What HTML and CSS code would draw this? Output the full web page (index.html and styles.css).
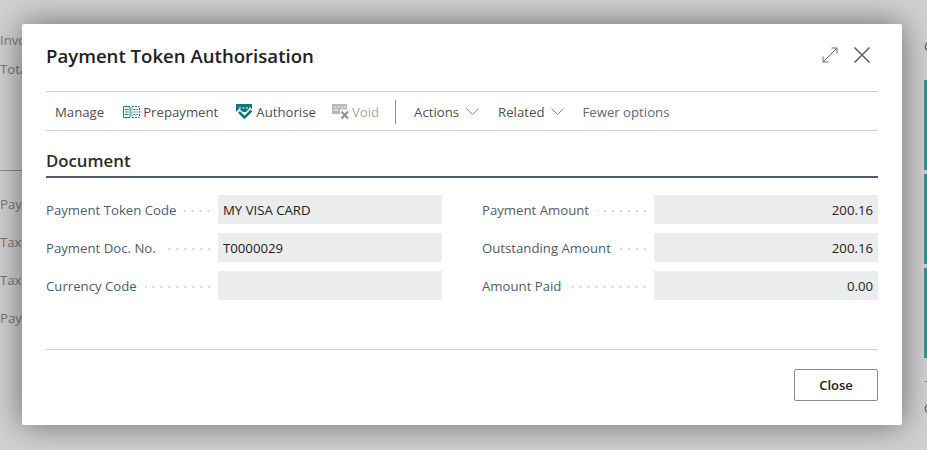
FILE: index.html
```html
<!DOCTYPE html>
<html lang="en">

<head>
    <meta charset="UTF-8">
    <meta name="viewport" content="width=device-width, initial-scale=1.0">
    <title>Payment Token Authorisation</title>
    <link rel="stylesheet" href="styles.css">
</head>

<body>

    <!-- page behind the dialog -->
    <div class="page">
        <div class="page-left">
            <div class="bg-top">
                <span>Invo</span>
                <span>Tota</span>
            </div>
            <div class="bg-line"></div>
            <div class="bg-rows">
                <span>Pay</span>
                <span>Tax</span>
                <span>Tax</span>
                <span>Pay</span>
            </div>
        </div>
        <div class="page-right">
            <span class="bg-c bg-c-top">C</span>
            <div class="tile"></div>
            <div class="tile"></div>
            <div class="tile"></div>
            <div class="bg-rule"></div>
            <span class="bg-c">C</span>
        </div>
    </div>

    <div class="dialog">
        <div class="dialog-head">
            <h1>Payment Token Authorisation</h1>
            <div class="head-icons">
                <svg width="18" height="18" viewBox="0 0 18 18" fill="none" stroke="#666" stroke-width="1">
                    <path d="M2 16 16 2M10.500 2H16v5.500M2 10.500V16h5.500" />
                </svg>
                <svg width="18" height="18" viewBox="0 0 18 18" fill="none" stroke="#605e5c" stroke-width="1.500">
                    <path d="M1.500 1.500 16.500 16.500M16.500 1.500 1.500 16.500" />
                </svg>
            </div>
        </div>

        <div class="actions">
            <span class="action first">Manage</span>
            <span class="action">
                <svg width="17" height="12" viewBox="0 0 17 12" fill="none" stroke="#1f7f86">
                    <path d="M.5.500h6.500v11H.5zM2 3.500h3.500M2 6h3.500M2 8.500h3.500" />
                    <path d="M9 .5h7.500v11H9z" stroke-dasharray="2 1" />
                    <path d="M10.500 3.500h4.500M10.500 6h4.500M10.500 8.500h4.500" stroke-dasharray="2 1" />
                </svg>
                Prepayment
            </span>
            <span class="action tight">
                <svg width="17" height="16" viewBox="0 0 17 16">
                    <path d="M0 0h16v8H0z" fill="#12777e" />
                    <path d="M3 4h2M6.500 4h2M10 4h2M13 4h1.500" stroke="#fff" fill="none" />
                    <path d="M1.500 6.500 8.500 13 16 5.500" stroke="#fff" stroke-width="5" fill="none" />
                    <path d="M3 8 8.500 13.500 15.500 6.500" stroke="#12777e" stroke-width="2.600" fill="none" />
                </svg>
                Authorise
            </span>
            <span class="action off">
                <svg width="18" height="16" viewBox="0 0 18 16">
                    <path d="M0 0h15v10H0z" fill="#b8b8b8" />
                    <path d="M2 3h2M5.500 3h2M9 3h2M12 3h2M2 6h4" stroke="#fff" fill="none" />
                    <path d="M8 5.500h9v10H8z" fill="#fff" />
                    <path d="M9.500 7.500 16 14.500M16 7.500 9.500 14.500" stroke="#8f8f8f" stroke-width="2" fill="none" />
                </svg>
                Void
            </span>
            <span class="sep"></span>
            <span class="action wide">
                Actions
                <svg class="chev" width="13" height="7" viewBox="0 0 13 7" fill="none" stroke="#888">
                    <path d="M.5.500 6.500 6.500 12.500.500" />
                </svg>
            </span>
            <span class="action">
                Related
                <svg class="chev" width="13" height="7" viewBox="0 0 13 7" fill="none" stroke="#888">
                    <path d="M.5.500 6.500 6.500 12.500.500" />
                </svg>
            </span>
            <span class="action fewer">Fewer options</span>
        </div>

        <h2>Document</h2>

        <div class="fields">
            <div class="field">
                <label>Payment Token Code</label>
                <span class="dots"></span>
                <span class="value">MY VISA CARD</span>
            </div>
            <div class="field">
                <label>Payment Amount</label>
                <span class="dots"></span>
                <span class="value num">200.16</span>
            </div>
            <div class="field">
                <label>Payment Doc. No.</label>
                <span class="dots"></span>
                <span class="value">T0000029</span>
            </div>
            <div class="field">
                <label>Outstanding Amount</label>
                <span class="dots"></span>
                <span class="value num">200.16</span>
            </div>
            <div class="field">
                <label>Currency Code</label>
                <span class="dots"></span>
                <span class="value"></span>
            </div>
            <div class="field">
                <label>Amount Paid</label>
                <span class="dots"></span>
                <span class="value num">0.00</span>
            </div>
        </div>

        <div class="dialog-foot">
            <button class="btn-close">Close</button>
        </div>
    </div>

</body>

</html>
```

FILE: styles.css
```css
* {
    padding: 0;
    margin: 0;
    box-sizing: border-box;
}

html,
body {
    height: 100%;
    overflow: hidden;
}

body {
    background-color: #d1d1d1;
    font-family: "Open Sans", "Noto Sans", sans-serif;
    font-size: 13.2px;
    color: #212121;
    position: relative;
}

.page {
    display: flex;
    justify-content: space-between;
    height: 100%;
    color: #777;
}

.page-left {
    width: 120px;
    white-space: nowrap;
}

.bg-top {
    display: flex;
    flex-direction: column;
    gap: 11px;
    padding-top: 31px;
    line-height: 18px;
}

.bg-line {
    height: 1px;
    background-color: #8c8c8c;
    margin-top: 92px;
}

.bg-rows {
    display: flex;
    flex-direction: column;
    gap: 20px;
    padding-top: 24px;
    line-height: 18px;
}

.page-right {
    width: 3px;
    white-space: nowrap;
    display: flex;
    flex-direction: column;
    gap: 4px;
}

.bg-c {
    line-height: 18px;
    margin-top: 13px;
    color: #555;
}

.bg-c-top {
    margin-top: 37px;
    margin-bottom: 21px;
}

.tile {
    height: 90px;
    flex: none;
    background-color: #3f8f92;
}

.bg-rule {
    height: 1px;
    flex: none;
    background-color: #999;
    margin-top: 19px;
}

.dialog {
    position: absolute;
    left: 22px;
    top: 24px;
    width: 880px;
    height: 401px;
    background-color: #fff;
    border-radius: 2px;
    padding: 0 24px;
    box-shadow: 0 0 32px rgba(0, 0, 0, .5);
    display: flex;
    flex-direction: column;
}

.dialog-head {
    display: flex;
    justify-content: space-between;
    align-items: center;
    height: 67px;
    padding-bottom: 5px;
}

h1 {
    font-size: 18.6px;
    font-weight: 600;
    color: #212121;
}

.head-icons {
    display: flex;
    gap: 14px;
    padding-right: 7px;
}

.actions {
    display: flex;
    align-items: center;
    height: 40px;
    border-top: 1px solid #d0d0d0;
    border-bottom: 1px solid #d0d0d0;
    color: #505050;
    padding-top: 1px;
}

.action {
    display: flex;
    align-items: center;
    gap: 3px;
    margin-right: 18px;
    white-space: nowrap;
}

.tight {
    margin-right: 16px;
}

.wide {
    margin-right: 19px;
}

.first {
    margin-left: 9px;
    margin-right: 19px;
}

.off {
    color: #a8a8a8;
    margin-right: 16px;
    gap: 2px;
}

.fewer {
    color: #5c6b7a;
}

.chev {
    margin-left: 4px;
}

.sep {
    width: 1px;
    height: 24px;
    background-color: #8a949e;
    margin-right: 18px;
}

h2 {
    font-size: 16.8px;
    font-weight: 600;
    line-height: 22px;
    color: #2b2b2b;
    margin-top: 19px;
    padding-bottom: 4px;
    border-bottom: 2px solid #505c6d;
}

.fields {
    display: grid;
    grid-template-columns: 396px 396px;
    column-gap: 40px;
    row-gap: 9px;
    margin-top: 17px;
}

.field {
    display: flex;
    align-items: center;
    height: 29px;
}

.field label {
    color: #505c6d;
    white-space: nowrap;
}

.dots {
    flex: 1;
    height: 2px;
    margin: 2px 8px 0 8px;
    background-image: linear-gradient(to left, #d6d6d6 2px, transparent 2px);
    background-size: 8px 2px;
    background-position: right top;
}

.value {
    flex: none;
    width: 224px;
    height: 29px;
    line-height: 30px;
    padding: 0 5px;
    background-color: #ebecee;
    color: #212121;
}

.num {
    text-align: right;
}

.dialog-foot {
    margin-top: 49px;
    border-top: 1px solid #d0d0d0;
    padding-top: 19px;
    display: flex;
    justify-content: flex-end;
}

.btn-close {
    width: 84px;
    height: 32px;
    background-color: #fff;
    border: 1px solid #8a8a8a;
    border-radius: 2px;
    font-family: inherit;
    font-size: 13px;
    font-weight: 600;
    color: #212121;
}
```
